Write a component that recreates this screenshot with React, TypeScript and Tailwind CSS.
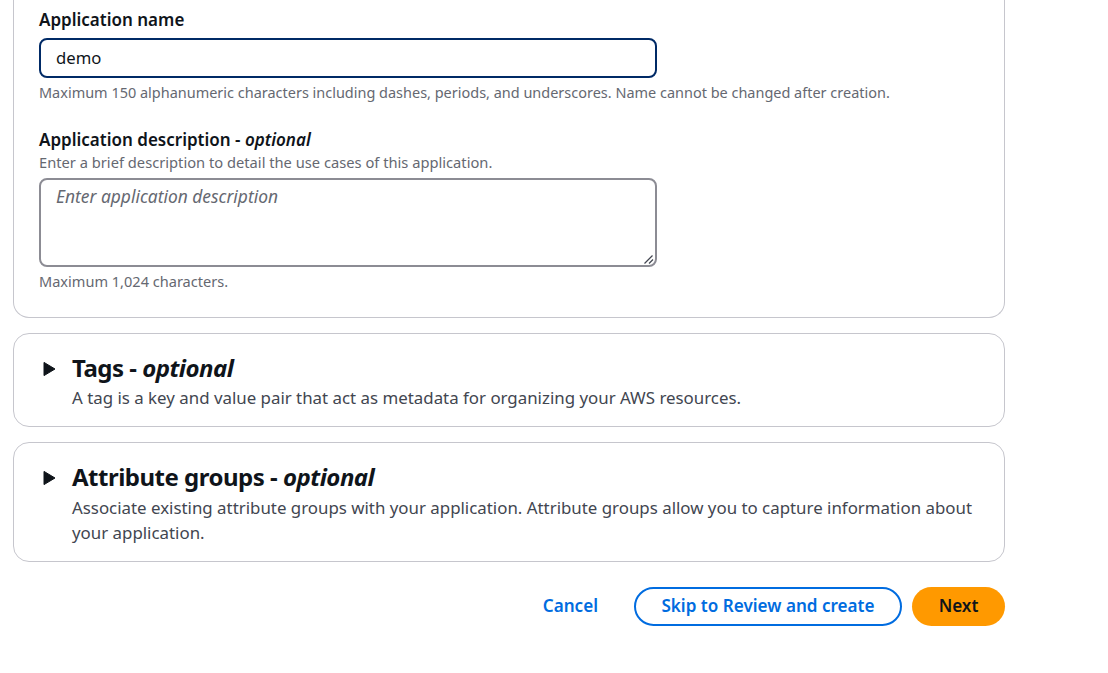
import React from "react";

function Arrow() {
  return (
    <svg width="13" height="16" viewBox="0 0 13 16" className="shrink-0">
      <path d="M1 1.4 L12 8 L1 14.6 Z" fill="#0f141a" stroke="#0f141a" strokeWidth="1" strokeLinejoin="round" />
    </svg>
  );
}

function Section({ title, desc, className, descClass }: { title: string; desc: string; className: string; descClass: string }) {
  return (
    <div className={`border border-[#c6c6cd] rounded-[16px] flex pl-[29px] pr-[20px] ${className}`}>
      <div className="mt-[27px] h-[16px] flex items-center"><Arrow /></div>
      <div className="ml-[16px] pt-[19px]">
        <div className="text-[24px] leading-[30px] font-bold text-[#0f141a] tracking-[-0.5px]">
          {title} - <i>optional</i>
        </div>
        <div className={`text-[16.88px] leading-[25px] text-[#424650] ${descClass}`}>{desc}</div>
      </div>
    </div>
  );
}

export default function App() {
  return (
    <div className="w-[1108px] h-[673px] overflow-hidden bg-white font-['Noto_Sans',sans-serif]">
      <div className="ml-[13px] w-[992px]">
        <div className="h-[318px] border border-t-0 border-[#c6c6cd] rounded-b-[16px] pl-[25px] pt-[10px]">
          <div className="text-[17px] leading-[20px] font-semibold text-[#0f141a]">Application name</div>
          <div className="mt-[8px] w-[618px] h-[40px] border-2 border-[#002a66] rounded-[8px] pl-[15px] flex items-center text-[16.7px] text-[#0f141a]">demo</div>
          <div className="mt-[6px] text-[14.48px] leading-[18px] text-[#656871]">Maximum 150 alphanumeric characters including dashes, periods, and underscores. Name cannot be changed after creation.</div>
          <div className="mt-[28px] text-[17px] leading-[20px] font-semibold text-[#0f141a]">Application description - <i>optional</i></div>
          <div className="text-[14.7px] leading-[18px] text-[#656871] mt-[3px]">Enter a brief description to detail the use cases of this application.</div>
          <div className="relative mt-[7px] w-[618px] h-[89px] border-2 border-[#8c8c94] rounded-[8px] pl-[15px] pt-[5px] text-[17.4px] leading-[22px] italic text-[#656871]">
            Enter application description
            <svg width="12" height="12" viewBox="0 0 12 12" className="absolute right-0 bottom-0">
              <path d="M1.5 10.5 L9.5 2.5 M6 10.5 L10 6.5" stroke="#424650" strokeWidth="1.2" />
            </svg>
          </div>
          <div className="mt-[5px] text-[14.55px] leading-[18px] text-[#656871]">Maximum 1,024 characters.</div>
        </div>
        <Section className="mt-[15px] h-[94px]" descClass="mt-[2px]" title="Tags" desc="A tag is a key and value pair that act as metadata for organizing your AWS resources." />
        <Section className="mt-[15px] h-[120px]" descClass="mt-[3px]" title="Attribute groups" desc="Associate existing attribute groups with your application. Attribute groups allow you to capture information about your application." />
        <div className="mt-[25px] flex justify-end items-center font-semibold text-[17.1px]">
          <span className="text-[#006ce0] mr-[36px] mb-[2px]">Cancel</span>
          <span className="h-[39px] w-[268px] pb-[2px] border-2 border-[#006ce0] rounded-full flex items-center justify-center text-[#006ce0]">Skip to Review and create</span>
          <span className="ml-[10px] h-[39px] w-[93px] pb-[2px] bg-[#ff9900] rounded-full flex items-center justify-center text-[#0f141a]">Next</span>
        </div>
      </div>
    </div>
  );
}
